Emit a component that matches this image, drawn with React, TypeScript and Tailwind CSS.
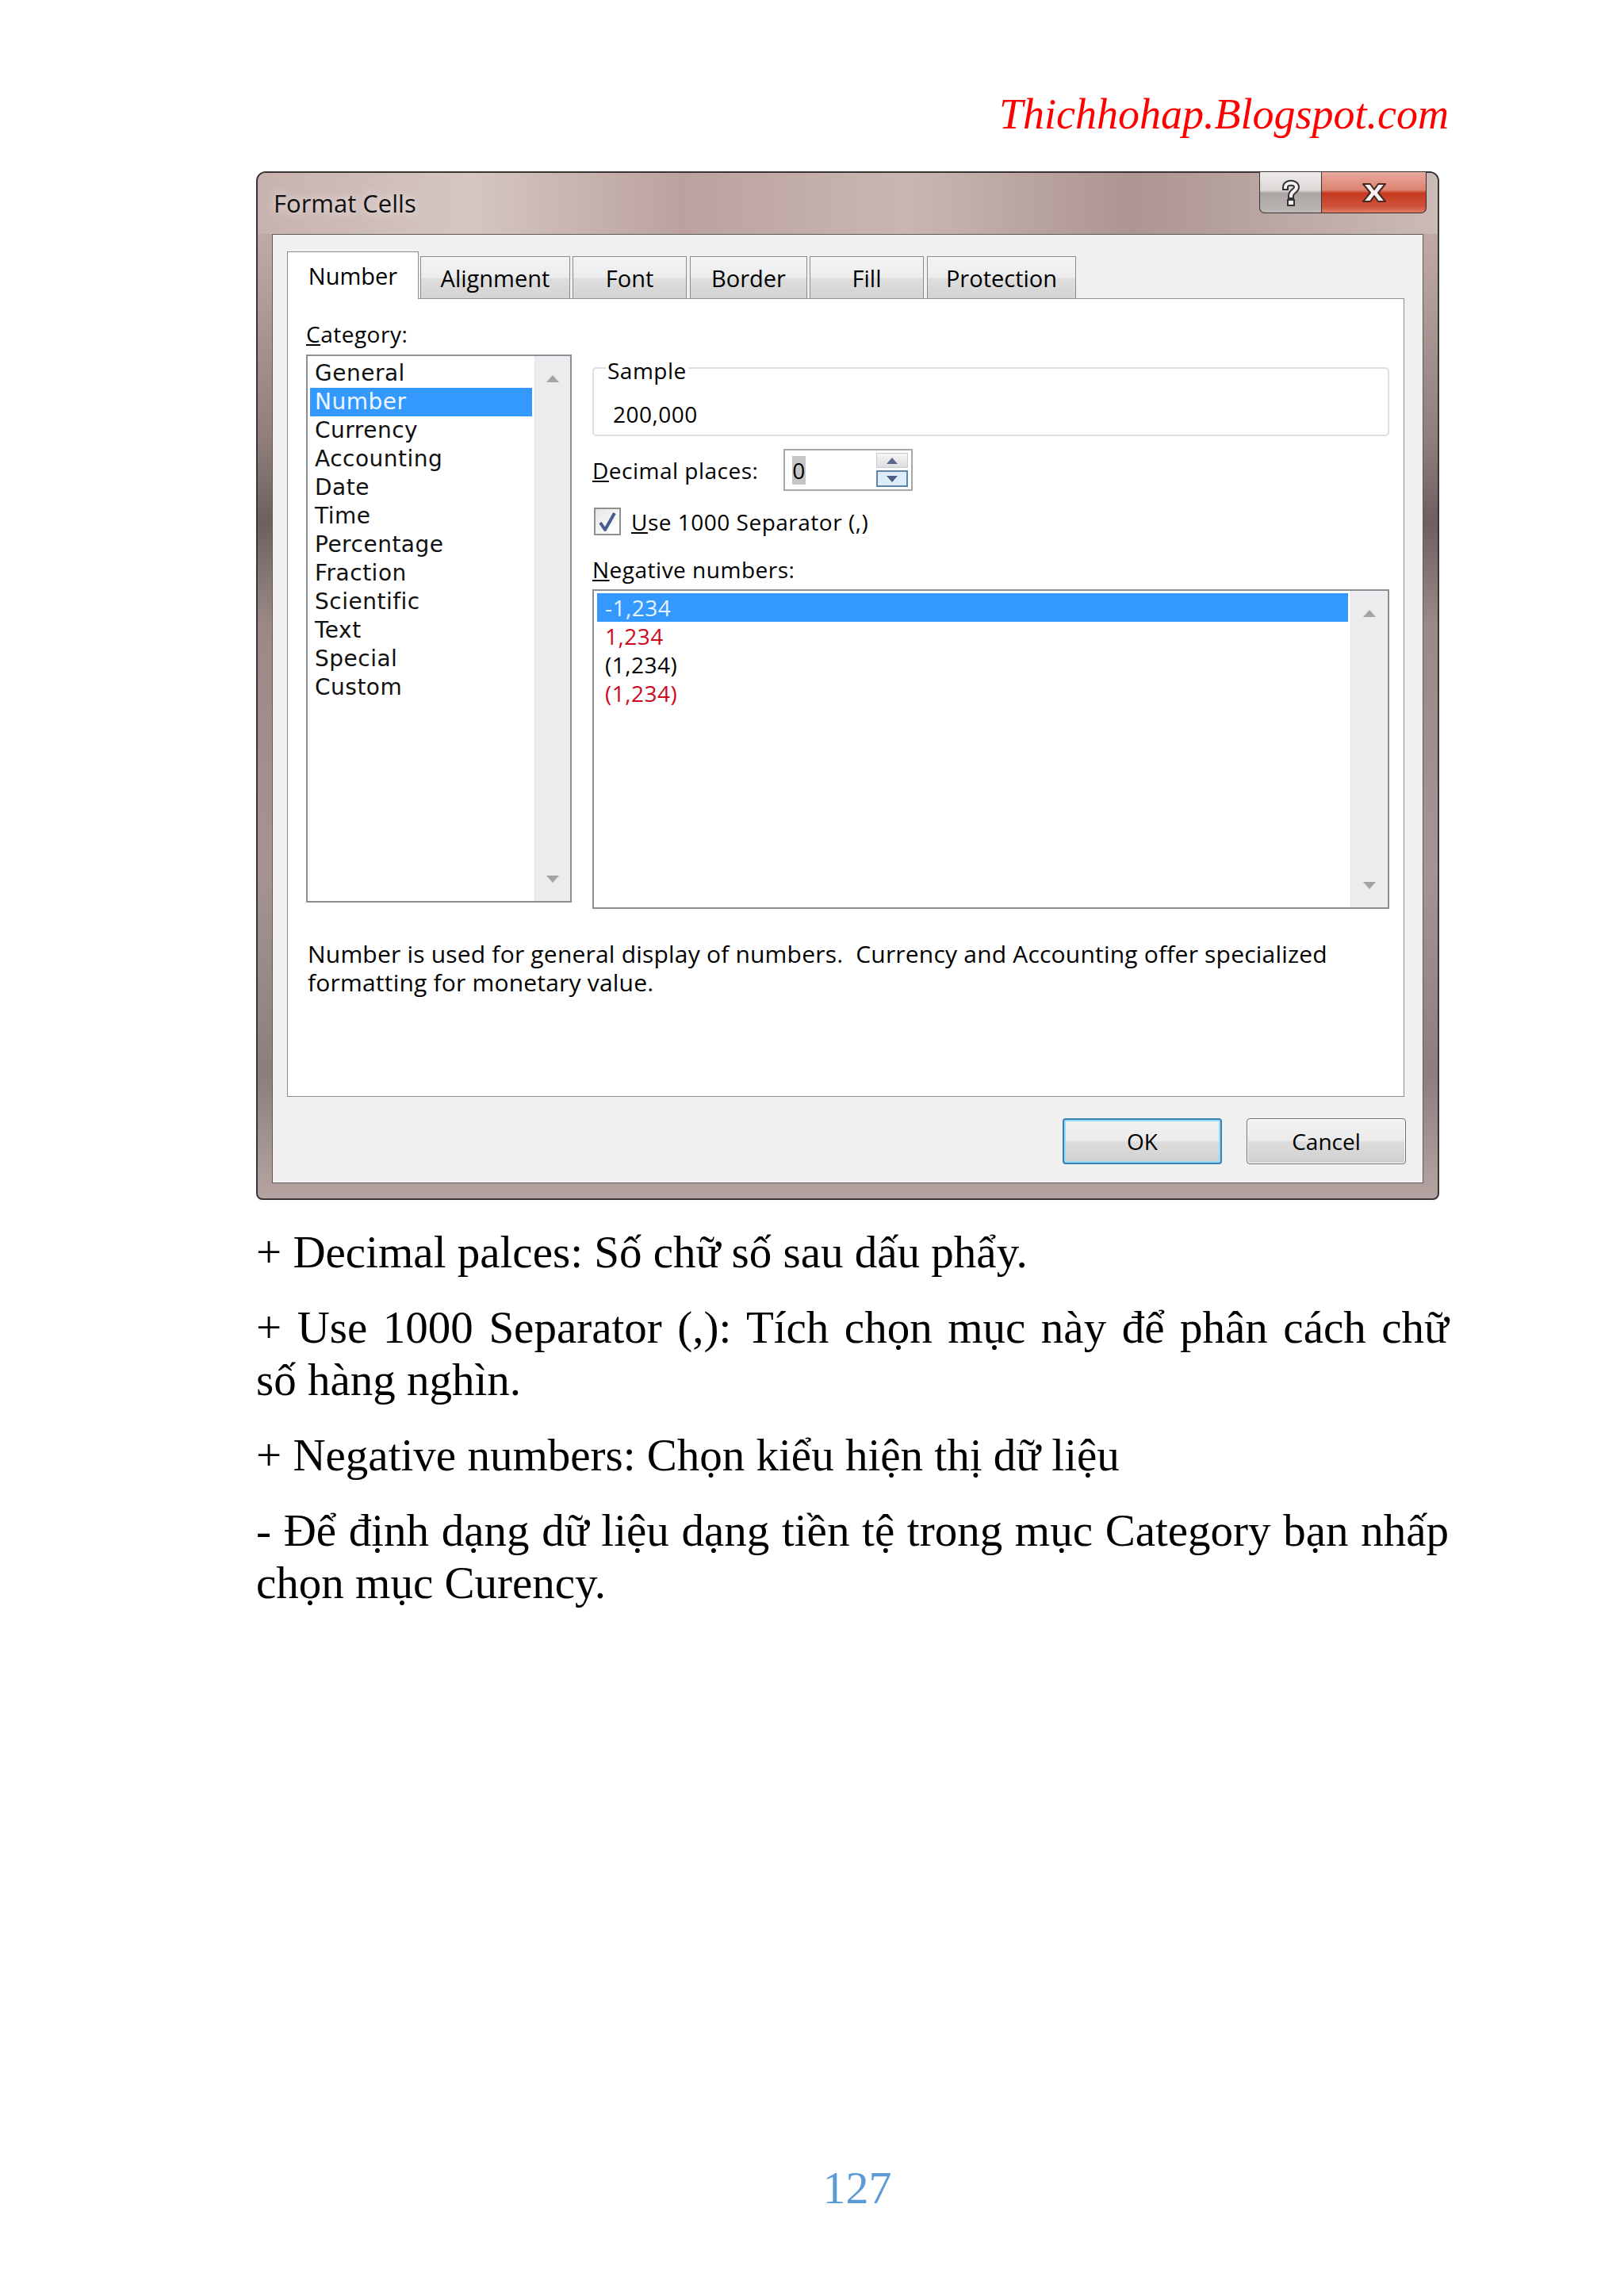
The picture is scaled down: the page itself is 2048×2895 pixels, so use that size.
import React from 'react'

const categories = [
  'General',
  'Number',
  'Currency',
  'Accounting',
  'Date',
  'Time',
  'Percentage',
  'Fraction',
  'Scientific',
  'Text',
  'Special',
  'Custom',
]

const negatives = [
  { text: '-1,234', color: 'text-[#e8f3ff]', selected: true },
  { text: '1,234', color: 'text-[#cc0a1e]', selected: false },
  { text: '(1,234)', color: 'text-black', selected: false },
  { text: '(1,234)', color: 'text-[#cc0a1e]', selected: false },
]

const tabs = [
  { label: 'Alignment', w: 'w-[189px]', ml: 'ml-[2px]' },
  { label: 'Font', w: 'w-[144px]', ml: 'ml-[3px]' },
  { label: 'Border', w: 'w-[148px]', ml: 'ml-[4px]' },
  { label: 'Fill', w: 'w-[144px]', ml: 'ml-[3px]' },
  { label: 'Protection', w: 'w-[188px]', ml: 'ml-[4px]' },
]

function ScrollArrow({ down }: { down?: boolean }) {
  return (
    <svg width="16" height="9" viewBox="0 0 16 9">
      <path d={down ? 'M0 0 H16 L8 9 Z' : 'M8 0 L16 9 H0 Z'} fill="#a3a3a6" />
    </svg>
  )
}

function ScrollBar({ w }: { w: string }) {
  return (
    <div className={`${w} h-full bg-[#ececef] border-l border-[#e2e2e6] flex flex-col items-center justify-between pt-[24px] pb-[23px]`}>
      <ScrollArrow />
      <ScrollArrow down />
    </div>
  )
}

function HelpGlyph() {
  // outlined question mark, like the Aero caption button
  const d = 'M9 11 C9 4, 23 4, 23 11 C23 16, 16 16, 16 22'
  return (
    <svg width="32" height="36" viewBox="0 0 32 36">
      <path d={d} fill="none" stroke="#333" strokeWidth="8" strokeLinecap="square" />
      <rect x="11" y="26" width="10" height="9" fill="#333" />
      <path d={d} fill="none" stroke="#f2f2f2" strokeWidth="4" strokeLinecap="square" />
      <rect x="13" y="28" width="6" height="5" fill="#f2f2f2" />
    </svg>
  )
}

function TitleBar() {
  return (
    <div className="h-[77px] flex justify-between bg-[linear-gradient(90deg,#c8b2af_0%,#d5c6c2_18%,#bba29f_36%,#c9b6b2_55%,#ad9592_74%,#cbbab6_100%)] rounded-t-[10px]">
      <div className="h-full flex items-center pl-[20px]">
        <span className="font-['Open_Sans',sans-serif] text-[31px] leading-none text-[#111] [text-shadow:0_0_12px_rgba(255,255,255,0.9)]">
          Format Cells
        </span>
      </div>
      <div className="flex mr-[14px] h-[52px] -mt-[1px]">
        <div className="w-[79px] h-full border border-t-0 border-[#3a3434] rounded-bl-[7px] bg-[linear-gradient(180deg,#efeded_0%,#dcd6d5_45%,#aaa4a3_52%,#bdb7b6_100%)] flex items-center justify-center">
          <HelpGlyph />
        </div>
        <div className="w-[132px] h-full border border-t-0 border-l-0 border-[#3a2a28] rounded-br-[7px] bg-[linear-gradient(180deg,#eaa99d_0%,#dc8472_44%,#c63a20_52%,#cf523a_85%,#e07e65_100%)] flex items-center justify-center">
          <svg width="34" height="28" viewBox="0 0 34 28">
            <path
              d="M3 3 H12 L17 10 L22 3 H31 L22 14 L31 25 H22 L17 18 L12 25 H3 L12 14 Z"
              fill="#f4f1f0"
              stroke="#4a2924"
              strokeWidth="2"
              strokeLinejoin="round"
            />
          </svg>
        </div>
      </div>
    </div>
  )
}

function CategoryList() {
  return (
    <div className="flex flex-col ml-[23px]">
      <div className="pt-[26px] h-[62px] font-['Open_Sans',sans-serif] text-[28px] leading-[36px] tracking-[0.5px] text-black">
        <span className="underline">C</span>ategory:
      </div>
      <div className="mt-[8px] w-[335px] h-[691px] border-2 border-[#8b8d93] bg-white flex">
        <div className="flex-1 flex flex-col pt-[4px] px-[3px]">
          {categories.map((c) => (
            <div
              key={c}
              className={`h-[36px] flex items-center pl-[6px] font-['DejaVu_Sans',sans-serif] text-[28px] leading-none tracking-[0.5px] ${
                c === 'Number' ? 'bg-[#3399ff] text-[#eef6ff]' : 'text-[#111]'
              }`}
            >
              {c}
            </div>
          ))}
        </div>
        <ScrollBar w="w-[45px]" />
      </div>
    </div>
  )
}

function RightPanel() {
  return (
    <div className="ml-[26px] w-[1005px] flex flex-col font-['Open_Sans',sans-serif] text-[28px] tracking-[0.5px] text-black">
      <div className="mt-[86px] h-[87px] border-2 border-[#dcdfe3] rounded-[5px] relative pl-[24px] pt-[39px]">
        <span className="absolute left-[15px] top-[-16px] bg-white px-[2px] leading-[36px]">Sample</span>
        <div className="leading-[36px]">200,000</div>
      </div>

      <div className="mt-[16px] h-[53px] flex items-center">
        <div className="w-[241px] leading-[36px]">
          <span className="underline">D</span>ecimal places:
        </div>
        <div className="w-[163px] h-[53px] border-2 border-[#a8a8a8] bg-white flex items-center pl-[9px] pr-[4px]">
          <span className="bg-[#c6c6c6] h-[36px] w-[17px] flex items-center justify-center leading-none">0</span>
          <div className="ml-auto flex flex-col gap-[3px]">
            <div className="w-[40px] h-[19px] border border-[#c3ccd6] bg-[linear-gradient(180deg,#f6f6f6,#dedede)] flex items-center justify-center">
              <svg width="14" height="8" viewBox="0 0 14 8">
                <path d="M7 0 L14 8 H0 Z" fill="#5a6a8e" />
              </svg>
            </div>
            <div className="w-[40px] h-[21px] border-2 border-[#5f84a8] bg-[#dcecf9] flex items-center justify-center">
              <svg width="14" height="8" viewBox="0 0 14 8">
                <path d="M0 0 H14 L7 8 Z" fill="#4b5e85" />
              </svg>
            </div>
          </div>
        </div>
      </div>

      <div className="mt-[21px] h-[35px] flex items-center">
        <div className="ml-[2px] w-[34px] h-[35px] border-2 border-[#8e8f8f] bg-[linear-gradient(135deg,#e4e4e4,#f8f8f8_60%,#ffffff)] flex items-center justify-center">
          <svg width="24" height="26" viewBox="0 0 24 26">
            <path d="M3 14 L9 23 L21 2" fill="none" stroke="#4a5d92" strokeWidth="4" strokeLinejoin="round" />
          </svg>
        </div>
        <div className="ml-[13px] leading-[36px]">
          <span className="underline">U</span>se 1000 Separator (,)
        </div>
      </div>

      <div className="mt-[25px] h-[36px] leading-[36px]">
        <span className="underline">N</span>egative numbers:
      </div>

      <div className="mt-[7px] h-[403px] border-2 border-[#8b8d93] bg-white flex">
        <div className="flex-1 flex flex-col pt-[3px] pl-[4px] pr-[3px]">
          {negatives.map((n, i) => (
            <div
              key={i}
              className={`h-[36px] flex items-center pl-[10px] leading-none ${n.color} ${n.selected ? 'bg-[#3399ff]' : ''}`}
            >
              {n.text}
            </div>
          ))}
        </div>
        <ScrollBar w="w-[47px]" />
      </div>
    </div>
  )
}

function Dialog() {
  return (
    <div className="ml-[323px] mt-[45px] w-[1492px] h-[1297px] border-2 border-[#3a3636] rounded-t-[12px] rounded-b-[8px] flex flex-col bg-[linear-gradient(180deg,#c6b1ae_0%,#bba6a3_8%,#8f7e7c_26%,#6e5f5e_34%,#9a8987_44%,#a59493_68%,#8d7e7d_88%,#b5a4a2_100%)]">
      <TitleBar />
      <div className="mx-[18px] mb-[19px] flex-1 border border-[#5e5a5a] bg-[#f0f0f0] flex flex-col">
        {/* tabs */}
        <div className="pt-[21px] pl-[18px] flex items-end">
          <div className="relative z-10 w-[166px] h-[60px] -mb-[1px] border border-b-0 border-[#898c95] bg-white flex items-center justify-center font-['Open_Sans',sans-serif] text-[29px] leading-none text-black">
            Number
          </div>
          {tabs.map((t) => (
            <div
              key={t.label}
              className={`${t.w} ${t.ml} h-[53px] border border-b-0 border-[#898c95] bg-[linear-gradient(180deg,#f4f4f4_0%,#ececec_50%,#dedede_52%,#d3d3d3_100%)] flex items-center justify-center font-['Open_Sans',sans-serif] text-[29px] leading-none text-black`}
            >
              {t.label}
            </div>
          ))}
        </div>

        {/* panel */}
        <div className="ml-[18px] mr-[23px] h-[1007px] border border-[#898c95] bg-white flex flex-col">
          <div className="flex items-start">
            <CategoryList />
            <RightPanel />
          </div>
          <div className="mt-[39px] pl-[25px] font-['Open_Sans',sans-serif] text-[30px] leading-[36px] tracking-[0.2px] text-black whitespace-pre">
            <div>Number is used for general display of numbers.  Currency and Accounting offer specialized</div>
            <div>formatting for monetary value.</div>
          </div>
        </div>

        {/* buttons */}
        <div className="mt-[27px] pb-[23px] pr-[21px] flex justify-end gap-[31px] font-['Open_Sans',sans-serif] text-[28px] text-black">
          <div className="w-[201px] h-[58px] rounded-[4px] border-2 border-[#3c7fb1] shadow-[inset_0_0_0_2px_#97dcf7] bg-[linear-gradient(180deg,#f3f3f3_0%,#ebebeb_48%,#dddddd_52%,#cfcfcf_100%)] flex items-center justify-center leading-none">
            OK
          </div>
          <div className="w-[201px] h-[58px] rounded-[4px] border border-[#707070] shadow-[inset_0_0_0_1px_#fcfcfc] bg-[linear-gradient(180deg,#f3f3f3_0%,#ebebeb_48%,#dddddd_52%,#cfcfcf_100%)] flex items-center justify-center leading-none">
            Cancel
          </div>
        </div>
      </div>
    </div>
  )
}

function Body() {
  return (
    <div className="mt-[33px] ml-[323px] w-[1504px] font-['Liberation_Serif',serif] text-[57px] leading-[66px] text-black">
      <p className="whitespace-nowrap">+ Decimal palces: Số chữ số sau dấu phẩy.</p>
      <div className="mt-[29px]">
        <p className="text-justify [text-align-last:justify] whitespace-nowrap">
          + Use 1000 Separator (,): Tích chọn mục này để phân cách chữ
        </p>
        <p>số hàng nghìn.</p>
      </div>
      <p className="mt-[29px] whitespace-nowrap">+ Negative numbers: Chọn kiểu hiện thị dữ liệu</p>
      <div className="mt-[29px]">
        <p className="text-justify [text-align-last:justify] whitespace-nowrap">
          - Để định dạng dữ liệu dạng tiền tệ trong mục Category bạn nhấp
        </p>
        <p>chọn mục Curency.</p>
      </div>
    </div>
  )
}

export default function App() {
  return (
    <div className="w-[2048px] min-h-[2895px] bg-white flex flex-col">
      <div className="pt-[117px] pr-[221px] flex justify-end">
        <span className="font-['Liberation_Serif',serif] italic text-[54px] leading-none text-[#ff0000]">
          Thichhohap.Blogspot.com
        </span>
      </div>
      <Dialog />
      <Body />
      <div className="mt-[701px] flex justify-center pl-[114px]">
        <span className="font-['Liberation_Serif',serif] text-[58px] leading-none text-[#5b9bd5]">127</span>
      </div>
    </div>
  )
}
